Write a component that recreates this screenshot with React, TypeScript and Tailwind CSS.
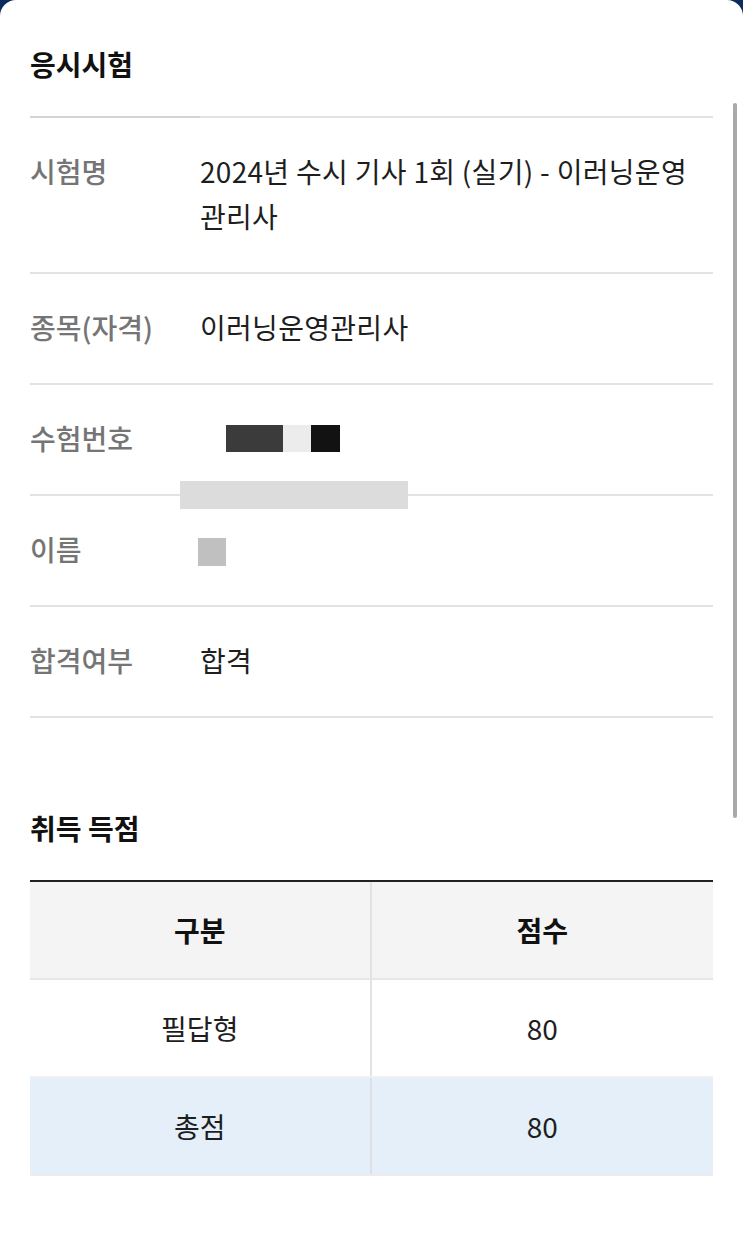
import React from "react";

const rows = [
  { label: "시험명", value: "2024년 수시 기사 1회 (실기) - 이러닝운영관리사" },
  { label: "종목(자격)", value: "이러닝운영관리사" },
  { label: "수험번호", value: "" },
  { label: "이름", value: "" },
  { label: "합격여부", value: "합격" },
];

function InfoRow({ label, value, index }: { label: string; value: string; index: number }) {
  return (
    <div className="relative flex border-b-2 border-[#e3e3e3] pt-[31px] pb-[33px] text-[28px] leading-[45px]">
      <div className="w-[170px] shrink-0 font-medium text-[#757575]">{label}</div>
      <div className="flex-1 pr-[24px] tracking-[0.3px] text-[#1e1e1e]">{value}</div>
      {index === 2 && (
        <>
          <div className="absolute left-[196px] top-[40px] flex h-[27px]">
            <div className="w-[57px] bg-[#3b3b3b]" />
            <div className="w-[28px] bg-[#ececec]" />
            <div className="w-[29px] bg-[#121212]" />
          </div>
          <div className="absolute left-[150px] top-[96px] z-10 h-[28px] w-[228px] bg-[#dcdcdc]" />
        </>
      )}
      {index === 3 && (
        <div className="absolute left-[168px] top-[42px] h-[28px] w-[28px] bg-[#c0c0c0]" />
      )}
    </div>
  );
}

export default function App() {
  return (
    <div
      className="relative min-h-[1248px] bg-[#0c2a5c]"
      style={{ fontFamily: '"Noto Sans CJK KR", "Noto Sans", sans-serif' }}
    >
      <div className="min-h-[1248px] rounded-t-[16px] bg-white px-[30px] pb-[70px]">
        <h2 className="pt-[46px] pb-[34px] text-[28px] font-bold leading-[36px] text-[#111]">응시시험</h2>
        <div className="flex h-[2px]">
          <div className="w-[170px] bg-[#d4d4d4]" />
          <div className="flex-1 bg-[#e3e3e3]" />
        </div>
        {rows.map((r, i) => (
          <InfoRow key={r.label} label={r.label} value={r.value} index={i} />
        ))}

        <h2 className="mt-[92px] mb-[34px] text-[28px] font-bold leading-[36px] text-[#111]">취득 득점</h2>
        <div className="border-t-2 border-[#222] text-[28px]">
          <div className="grid grid-cols-2 border-b-2 border-[#e6e6e6] bg-[#f4f4f4]">
            <div className="flex h-[96px] items-center justify-center border-r-2 border-[#e2e2e2] font-bold text-[#111]">
              구분
            </div>
            <div className="flex h-[96px] items-center justify-center font-bold text-[#111]">점수</div>
          </div>
          <div className="grid grid-cols-2 border-b-2 border-[#f0f0f0] bg-white">
            <div className="flex h-[96px] items-center justify-center border-r-2 border-[#e2e2e2] text-[#1e1e1e]">
              필답형
            </div>
            <div className="flex h-[96px] items-center justify-center text-[#1e1e1e]">80</div>
          </div>
          <div className="grid grid-cols-2 border-b-2 border-[#ececec] bg-[#e5eff9]">
            <div className="flex h-[96px] items-center justify-center border-r-2 border-[#dcdfe3] text-[#1e1e1e]">
              총점
            </div>
            <div className="flex h-[96px] items-center justify-center text-[#1e1e1e]">80</div>
          </div>
        </div>
      </div>

      <div className="absolute right-[6px] top-[103px] h-[715px] w-[4px] rounded-full bg-[#a9a9a9]" />
    </div>
  );
}
